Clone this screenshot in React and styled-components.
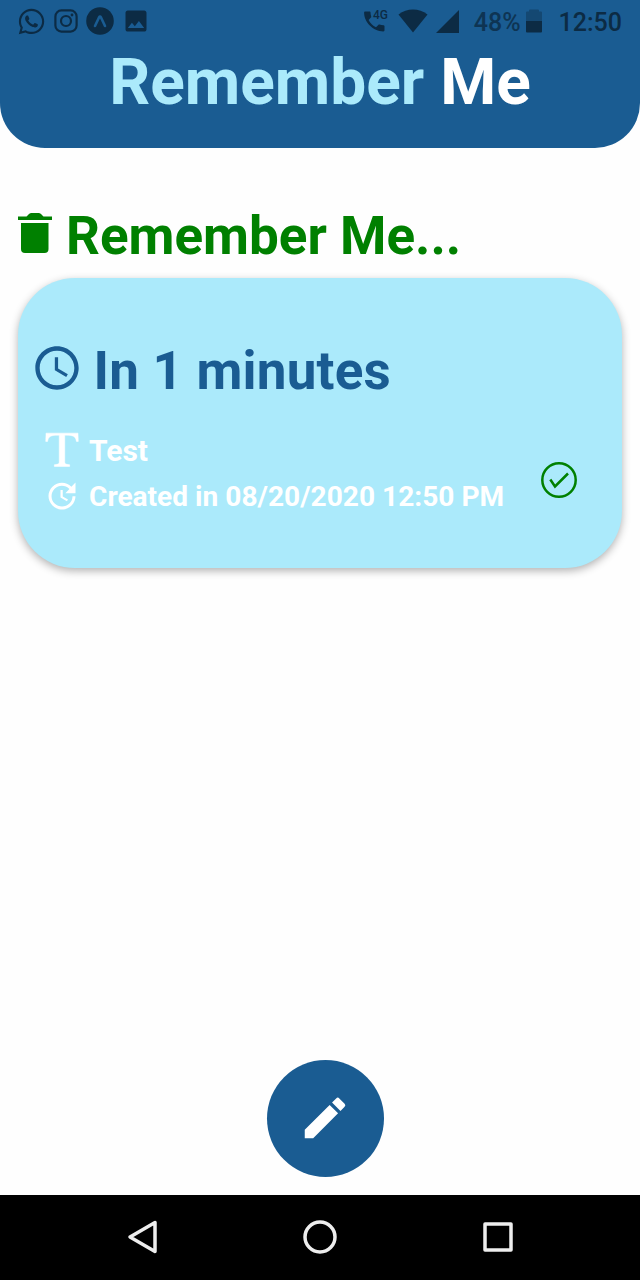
import React from "react";
import styled, { createGlobalStyle } from "styled-components";
import { MdUpdate, MdEdit, MdAccessTime, MdImage } from "react-icons/md";
import { FaWhatsapp } from "react-icons/fa";
import { BsFonts } from "react-icons/bs";

const navy = "#1a5c92";
const sky = "#abeafb";
const ink = "#0c2b44";

const GlobalStyle = createGlobalStyle`
  * { box-sizing: border-box; }
  body { margin: 0; background: #fff; font-family: Roboto, sans-serif; }
  svg { display: block; flex: none; }
`;

const Screen = styled.div`
  display: flex;
  flex-direction: column;
  width: 640px;
  height: 1280px;
  overflow: hidden;
  background: #fefefe;
`;

const Header = styled.header`
  height: 147.5px;
  flex: none;
  background: ${navy};
  border-radius: 0 0 45px 45px;
`;

const StatusBar = styled.div`
  height: 42px;
  padding: 0 18px 0 17px;
  display: flex;
  justify-content: space-between;
  align-items: center;
  color: ${ink};
`;

const StatusGroup = styled.div`
  display: flex;
  align-items: center;
  gap: ${(p) => p.$gap}px;
`;

const StatusText = styled.span`
  font-size: 25px;
  font-weight: 500;
  line-height: 30px;
  margin-top: 4px;
  margin-left: ${(p) => p.$before || 0}px;
  margin-right: ${(p) => p.$after || 0}px;
  opacity: ${(p) => (p.$dim ? 0.8 : 1)};
`;

const Title = styled.h1`
  margin: 0;
  text-align: center;
  font-size: 64px;
  line-height: 82px;
  font-weight: 700;
  color: #fff;
`;

const TitleAccent = styled.span`
  color: ${sky};
`;

const Content = styled.main`
  flex: 1;
  display: flex;
  flex-direction: column;
  padding: 59px 18px 0 18px;
`;

const SectionHeading = styled.div`
  display: flex;
  align-items: center;
  gap: 14px;
  height: 60px;
  color: #008000;

  svg { margin-bottom: 7px; }
`;

const SectionTitle = styled.h2`
  margin: 0 0 2px;
  font-size: 53px;
  line-height: 60px;
  font-weight: 700;
`;

const Card = styled.section`
  margin-top: 11px;
  height: 290.5px;
  padding: 60px 45px 0 12.5px;
  border-radius: 57px;
  background: ${sky};
  box-shadow: 0 3px 9px rgba(0, 0, 0, 0.3);
`;

const Due = styled.div`
  display: flex;
  align-items: center;
  gap: 11px;
  height: 66px;
  color: ${navy};
  font-size: 53px;
  letter-spacing: 0.2px;
  line-height: 66px;
  font-weight: 700;

  svg { margin-bottom: 6px; }
`;

const CardBody = styled.div`
  display: flex;
  justify-content: space-between;
  align-items: center;
  margin-top: 24px;

  > svg { margin-top: 13px; }
`;

const Details = styled.div`
  display: flex;
  flex-direction: column;
  padding-left: 3.5px;
`;

const Detail = styled.div`
  display: flex;
  align-items: center;
  height: 46px;
  color: #fff;
  font-size: ${(p) => p.$size}px;
  font-weight: 700;
`;

const DetailIcon = styled.span`
  width: 55px;
  display: flex;
  justify-content: center;

  svg { margin-bottom: ${(p) => p.$lift || 0}px; }
`;

const TypeIcon = styled(BsFonts)`
  width: 60px;
  height: 54px;

  path {
    stroke: currentColor;
    stroke-width: 0.15;
  }
`;

const Footer = styled.div`
  display: flex;
  justify-content: center;
  padding: 0 0 18px 10px;
`;

const ComposeButton = styled.button`
  width: 117px;
  height: 117px;
  padding: 0;
  border: 0;
  border-radius: 50%;
  background: ${navy};
  color: #fff;
  display: flex;
  align-items: center;
  justify-content: center;
`;

const NavBar = styled.nav`
  height: 85.5px;
  flex: none;
  background: #000;
  display: flex;
  align-items: center;
  justify-content: space-between;
  padding: 0 125px;
`;

const InstagramIcon = () => (
  <svg width="24" height="24" viewBox="0 0 24 24" fill="none" stroke="currentColor" strokeWidth="2.2">
    <rect x="1.4" y="1.4" width="21.2" height="21.2" rx="6" />
    <circle cx="12" cy="12" r="5" />
    <circle cx="18" cy="6" r="1.4" fill="currentColor" stroke="none" />
  </svg>
);

const ExpoIcon = () => (
  <svg width="28" height="28" viewBox="0 0 28 28">
    <circle cx="14" cy="14" r="13.8" fill="currentColor" />
    <path d="M9 19 L13 10.5 Q14 8.8 15 10.5 L19 19" fill="none" stroke={navy} strokeWidth="2.6" strokeLinecap="round" strokeLinejoin="round" />
  </svg>
);

const CallIcon = () => (
  <svg width="26" height="26" viewBox="0 0 26 26" fill="currentColor">
    <path d="M1.200 3.500h4.200c.6 0 1.100.4 1.100 1 0 1.400.3 2.700.7 3.900.1.400 0 .9-.3 1.200l-2.300 2.300c1.600 3.200 4.200 5.700 7.400 7.300l2.300-2.300c.3-.3.8-.4 1.200-.3 1.200.4 2.500.6 3.900.6.6 0 1.100.5 1.100 1.100v4c0 .6-.5 1.100-1.100 1.100C9 23.400.1 14.500.1 4.600c0-.6.500-1.100 1.100-1.100z" />
    <text x="9" y="11" fontSize="12" fontWeight="500" fontFamily="Roboto, sans-serif">4G</text>
  </svg>
);

const WifiIcon = () => (
  <svg width="30" height="24" viewBox="0 0 30 24">
    <path d="M15 23.500 L.5 5.500 Q7 .5 15 .5 T29.500 5.500Z" fill="currentColor" />
  </svg>
);

const SignalIcon = () => (
  <svg width="23" height="23" viewBox="0 0 23 23">
    <path d="M23 0V23H0Z" fill="currentColor" />
  </svg>
);

const BatteryIcon = () => (
  <svg width="16" height="24" viewBox="0 0 16 24" fill="currentColor">
    <path opacity=".4" d="M0 3.500Q0 2.500 1 2.500H3V1.500Q3 .5 4 .5H12Q13 .5 13 1.500V2.500H15Q16 2.500 16 3.500V12H0Z" />
    <path d="M0 12H16V22.500Q16 23.500 15 23.500H1Q0 23.500 0 22.500Z" />
  </svg>
);

const TrashIcon = () => (
  <svg width="34" height="40" viewBox="0 0 34 40" fill="currentColor">
    <path d="M0 3.500H8.500L11 1Q12 0 13.500 0H20.500Q22 0 23 1L25.500 3.500H34V7H0Z" />
    <path d="M3 10H30.500V36Q30.500 40 26.500 40H7Q3 40 3 36Z" />
  </svg>
);

const CheckIcon = () => (
  <svg width="36" height="36" viewBox="0 0 36 36" fill="none" stroke="#008000" strokeWidth="2.500">
    <circle cx="18" cy="18" r="16.700" />
    <path d="M9.300 17.500 L14 24.500 L27 11.500" />
  </svg>
);

const BackIcon = () => (
  <svg width="34" height="34" viewBox="0 0 34 34" fill="none" stroke="#eee" strokeWidth="3.500" strokeLinejoin="round">
    <path d="M30 2.500V31.500L5 17Z" />
  </svg>
);

const HomeIcon = () => (
  <svg width="34" height="34" viewBox="0 0 34 34" fill="none" stroke="#eee" strokeWidth="3.500">
    <circle cx="17" cy="17" r="15" />
  </svg>
);

const RecentsIcon = () => (
  <svg width="34" height="34" viewBox="0 0 34 34" fill="none" stroke="#eee" strokeWidth="3.500" strokeLinejoin="round">
    <rect x="4" y="4" width="26" height="26" />
  </svg>
);

export default function App() {
  return (
    <Screen>
      <GlobalStyle />
      <Header>
        <StatusBar>
          <StatusGroup $gap={8}>
            <FaWhatsapp size={29} />
            <InstagramIcon />
            <ExpoIcon />
            <MdImage size={28} />
          </StatusGroup>
          <StatusGroup $gap={8}>
            <CallIcon />
            <WifiIcon />
            <SignalIcon />
            <StatusText $dim $before={7} $after={-3}>48%</StatusText>
            <BatteryIcon />
            <StatusText $before={9}>12:50</StatusText>
          </StatusGroup>
        </StatusBar>
        <Title>
          <TitleAccent>Remember</TitleAccent> Me
        </Title>
      </Header>
      <Content>
        <SectionHeading>
          <TrashIcon />
          <SectionTitle>Remember Me...</SectionTitle>
        </SectionHeading>
        <Card>
          <Due>
            <MdAccessTime size={52} />
            In 1 minutes
          </Due>
          <CardBody>
            <Details>
              <Detail $size={30}>
                <DetailIcon $lift={2}>
                  <TypeIcon preserveAspectRatio="none" />
                </DetailIcon>
                Test
              </Detail>
              <Detail $size={28.1}>
                <DetailIcon $lift={1}>
                  <MdUpdate size={36} />
                </DetailIcon>
                Created in 08/20/2020 12:50 PM
              </Detail>
            </Details>
            <CheckIcon />
          </CardBody>
        </Card>
      </Content>
      <Footer>
        <ComposeButton aria-label="Write a reminder">
          <MdEdit size={54} />
        </ComposeButton>
      </Footer>
      <NavBar>
        <BackIcon />
        <HomeIcon />
        <RecentsIcon />
      </NavBar>
    </Screen>
  );
}
